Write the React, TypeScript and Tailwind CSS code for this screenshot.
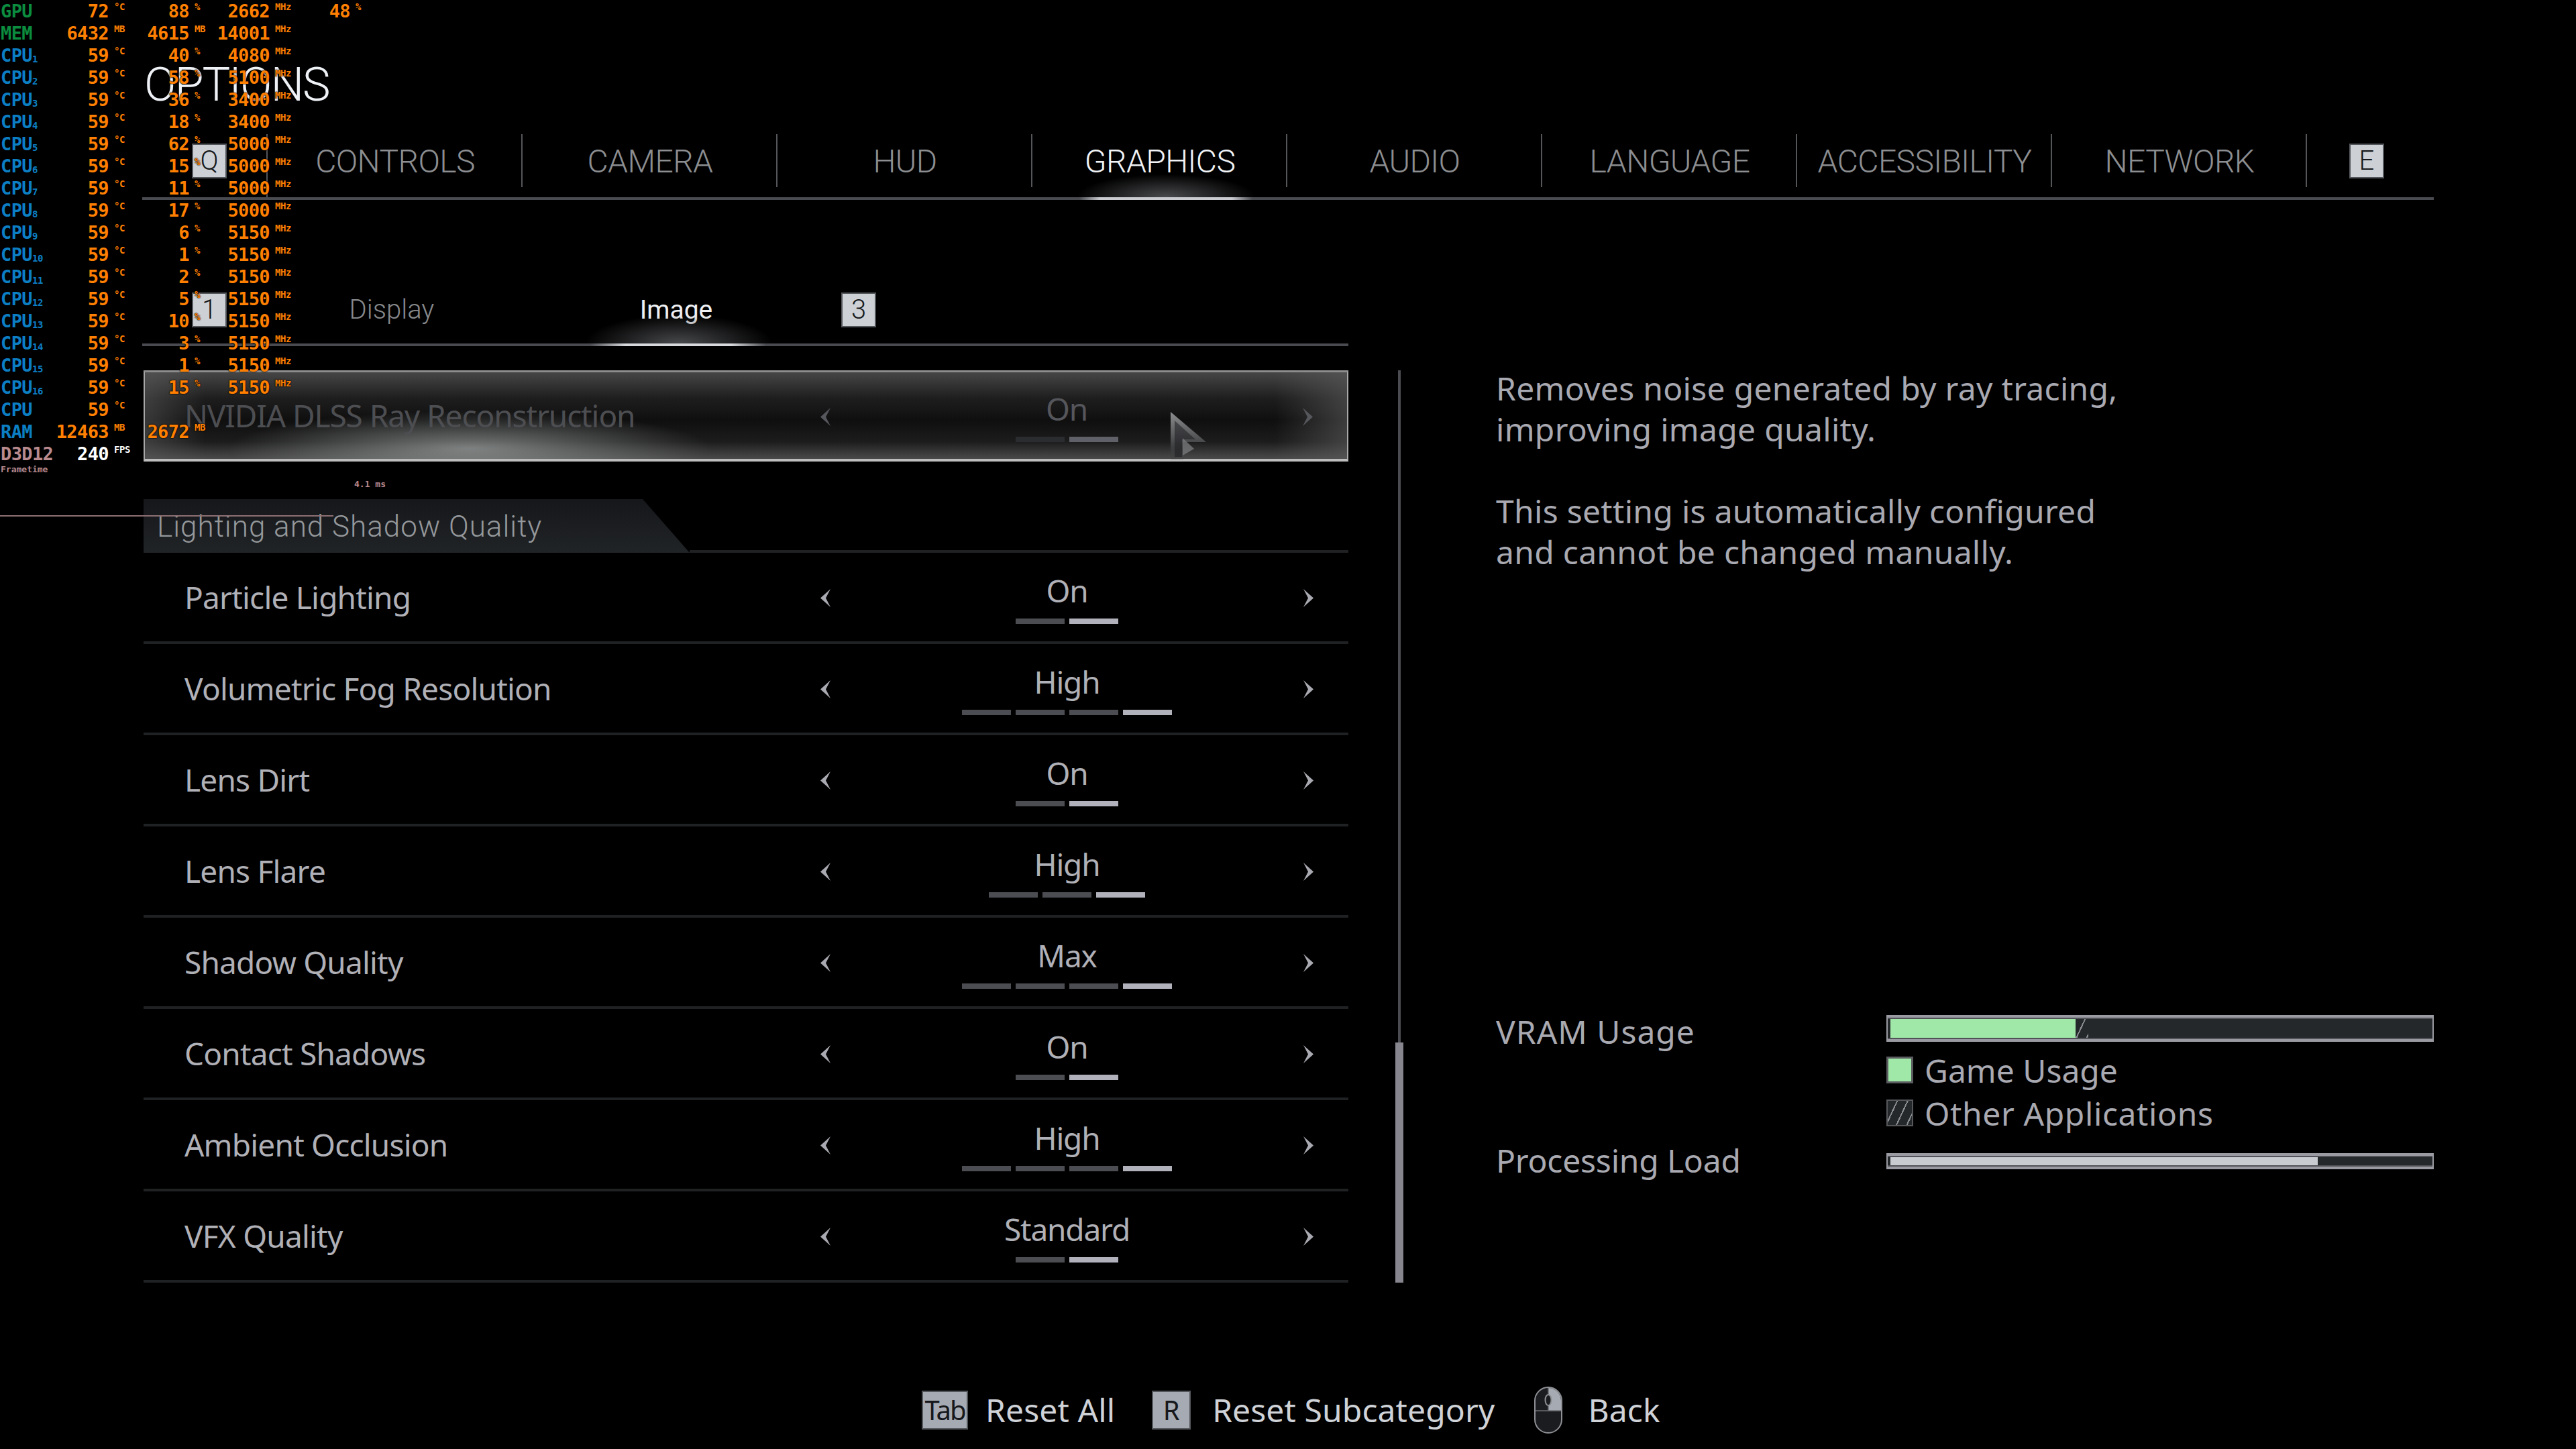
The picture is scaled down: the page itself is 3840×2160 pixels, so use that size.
import React from 'react';

interface OsdRow {
  label: string;
  sub?: string;
  labelColor: string;
  temp?: string;
  tempUnit?: string;
  load?: string;
  loadUnit?: string;
  clock?: string;
  clockUnit?: string;
  extra?: string;
}

const cpuRows: [string, string][] = [
  ['40', '4080'],
  ['58', '5100'],
  ['36', '3400'],
  ['18', '3400'],
  ['62', '5000'],
  ['15', '5000'],
  ['11', '5000'],
  ['17', '5000'],
  ['6', '5150'],
  ['1', '5150'],
  ['2', '5150'],
  ['5', '5150'],
  ['10', '5150'],
  ['3', '5150'],
  ['1', '5150'],
  ['15', '5150'],
];

const osdRows: OsdRow[] = [
  { label: 'GPU', labelColor: 'text-[#0b8c3e]', temp: '72', tempUnit: '°C', load: '88', loadUnit: '%', clock: '2662', clockUnit: 'MHz', extra: '48' },
  { label: 'MEM', labelColor: 'text-[#0b8c3e]', temp: '6432', tempUnit: 'MB', load: '4615', loadUnit: 'MB', clock: '14001', clockUnit: 'MHz' },
  ...cpuRows.map(([load, clock], i) => ({
    label: 'CPU',
    sub: String(i + 1),
    labelColor: 'text-[#0c7fc4]',
    temp: '59',
    tempUnit: '°C',
    load,
    loadUnit: '%',
    clock,
    clockUnit: 'MHz',
  })),
  { label: 'CPU', labelColor: 'text-[#0c7fc4]', temp: '59', tempUnit: '°C' },
  { label: 'RAM', labelColor: 'text-[#0c7fc4]', temp: '12463', tempUnit: 'MB', load: '2672', loadUnit: 'MB' },
];

function OsdCell({ value, unit, width, color = 'text-[#ff8000]' }: { value?: string; unit?: string; width: string; color?: string }) {
  if (!value) return <div className={width} />;
  return (
    <div className={`${width} flex items-start justify-end ${color} [text-shadow:0_0_2px_#000,0_0_2px_#000]`}>
      <span>{value}</span>
      <span className="w-[40px] pl-[8px] pt-[3px] text-[14px] leading-[14px] tracking-[-0.4px]">{unit}</span>
    </div>
  );
}

function Osd() {
  return (
    <div className="absolute left-0 top-0 z-20 font-['DejaVu_Sans_Mono',monospace] text-[27px] font-bold leading-[33px] tracking-[-0.6px]">
      {osdRows.map((row, i) => (
        <div key={i} className="flex h-[33px] items-start">
          <div className={`flex w-[80px] items-end pl-[1px] ${row.labelColor}`}>
            <span>{row.label}</span>
            {row.sub && <span className="mb-[4px] text-[14px] leading-[14px] tracking-[-0.4px]">{row.sub}</span>}
          </div>
          <OsdCell value={row.temp} unit={row.tempUnit} width="w-[122px]" />
          <OsdCell value={row.load} unit={row.loadUnit} width="w-[120px]" />
          <OsdCell value={row.clock} unit={row.clockUnit} width="w-[120px]" />
          <OsdCell value={row.extra} unit="%" width="w-[120px]" />
        </div>
      ))}
      <div className="flex h-[33px] items-start">
        <div className="w-[80px] pl-[1px] text-[#b98a8e]">D3D12</div>
        <OsdCell value="240" unit="FPS" width="w-[122px]" color="text-white" />
      </div>
      <div className="-mt-[1px] pl-[1px] text-[13px] leading-[16px] tracking-normal text-[#b98a8e]">Frametime</div>
      <div className="mt-[6px] pl-[528px] text-[13px] leading-[16px] tracking-normal text-[#b98a8e]">4.1 ms</div>
      <div className="mt-[38px] h-[2px] w-[497px] bg-[#8c6f72]" />
    </div>
  );
}

function KeyCap({ label, className = '' }: { label: string; className?: string }) {
  return (
    <div className={`flex h-[52px] w-[52px] shrink-0 items-center justify-center border-2 border-[#53565a] bg-[#cdd1d6] font-['Roboto',sans-serif] text-[40px] font-light text-[#16181b] ${className}`}>
      {label}
    </div>
  );
}

function Chevron({ flip = false, dim = false }: { flip?: boolean; dim?: boolean }) {
  return (
    <svg viewBox="0 0 15 27" className={`mt-[3px] h-[27px] w-[15px] shrink-0 ${flip ? '-scale-x-100' : ''} ${dim ? 'fill-[#56575c]' : 'fill-[#a9a9b1]'}`}>
      <path d="M0 0 L15 13.5 L0 27 L7 13.5 Z" />
    </svg>
  );
}

function Pips({ count, dim = false }: { count: number; dim?: boolean }) {
  return (
    <div className="mt-[11px] flex gap-[7px]">
      {Array.from({ length: count }).map((_, i) => {
        const active = i === count - 1;
        let color = active ? 'bg-[#b0b1bb]' : 'bg-[#4c4d52]';
        if (dim) color = active ? 'bg-[#5f6068]' : 'bg-[#2b2c30]';
        return <div key={i} className={`h-[8px] w-[73px] ${color}`} />;
      })}
    </div>
  );
}

interface SettingProps {
  label: string;
  value: string;
  pips: number;
  dim?: boolean;
}

function SettingRow({ label, value, pips, dim = false }: SettingProps) {
  return (
    <div className={`flex h-full flex-1 items-center ${dim ? 'pl-[59px] pr-[51px]' : 'pl-[61px] pr-[52px]'}`}>
      <div className={`w-[948px] text-[46px] ${dim ? 'tracking-[-1.1px] text-[#4d4e52]' : 'tracking-[-0.8px] text-[#b0b0b7]'}`}>{label}</div>
      <Chevron flip dim={dim} />
      <div className={`flex flex-1 flex-col items-center ${dim ? '-mt-[3px]' : '-mt-[1px]'}`}>
        <div className={`h-[62px] text-[46px] leading-[62px] tracking-[-1.2px] ${dim ? 'text-[#55565b]' : 'text-[#b0b0b7]'}`}>{value}</div>
        <Pips count={pips} dim={dim} />
      </div>
      <Chevron dim={dim} />
    </div>
  );
}

const settings: SettingProps[] = [
  { label: 'Particle Lighting', value: 'On', pips: 2 },
  { label: 'Volumetric Fog Resolution', value: 'High', pips: 4 },
  { label: 'Lens Dirt', value: 'On', pips: 2 },
  { label: 'Lens Flare', value: 'High', pips: 3 },
  { label: 'Shadow Quality', value: 'Max', pips: 4 },
  { label: 'Contact Shadows', value: 'On', pips: 2 },
  { label: 'Ambient Occlusion', value: 'High', pips: 4 },
  { label: 'VFX Quality', value: 'Standard', pips: 2 },
];

const topTabs = ['CONTROLS', 'CAMERA', 'HUD', 'GRAPHICS', 'AUDIO', 'LANGUAGE', 'ACCESSIBILITY', 'NETWORK'];

function Cursor() {
  return (
    <svg viewBox="0 0 56 72" className="absolute left-[1528px] top-[58px] h-[72px] w-[56px]">
      <defs>
        <linearGradient id="cursorFade" x1="0" y1="0" x2="0" y2="1">
          <stop offset="0" stopColor="#8d8e90" />
          <stop offset="0.6" stopColor="#4c4d4f" />
          <stop offset="1" stopColor="#3a3b3d" stopOpacity="0.2" />
        </linearGradient>
      </defs>
      <path d="M1 1 L54 46 L20 46 L20 72 L1 72 Z" fill="url(#cursorFade)" />
      <path d="M7 14 L38 42 L18 42 L18 68 L7 68 Z" fill="#1d1e20" fillOpacity="0.55" />
      <path d="M19 40 L36 56 L19 66 Z" fill="#77787b" fillOpacity="0.8" />
    </svg>
  );
}

function Mouse() {
  return (
    <svg viewBox="0 0 42 70" className="h-[70px] w-[42px] shrink-0">
      <rect x="1" y="1" width="40" height="68" rx="20" fill="#1b1c1f" stroke="#8e9095" strokeWidth="2" />
      <path d="M21 2 A19 19 0 0 1 40 21 V36 H21 Z" fill="#a6abb3" />
      <path d="M2 36 H40 M21 2 V36" stroke="#6c6e73" strokeWidth="1.5" />
      <ellipse cx="21" cy="20" rx="4.5" ry="8" fill="#1b1c1f" stroke="#8e9095" strokeWidth="2" />
    </svg>
  );
}

function Hatch({ className = '' }: { className?: string }) {
  return <div className={`bg-[repeating-linear-gradient(115deg,#25282a_0_12px,#8a8c91_12px_14px)] ${className}`} />;
}

export default function App() {
  return (
    <div className="relative h-[2160px] w-[3840px] overflow-hidden bg-black font-['Noto_Sans',sans-serif]">
      <Osd />

      <h1 className="pl-[215px] pt-[85px] font-['Roboto',sans-serif] text-[70px] font-light leading-[82px] tracking-[-2px] text-[#eef1f6]">OPTIONS</h1>

      {/* top category tabs */}
      <div className="ml-[212px] mt-[33px] flex h-[98px] w-[3416px] items-start border-b-4 border-[#4a4b50] pl-[74px]">
        <KeyCap label="Q" className="mt-[14px]" />
        <div className="ml-[59px] flex border-l-2 border-[#55565a]">
          {topTabs.map((tab) => (
            <div key={tab} className="relative flex h-[94px] w-[380px] justify-center">
              <div className="absolute right-0 top-0 h-[79px] w-[2px] bg-[#55565a]" />
              <span className={`pt-[12px] font-['Roboto',sans-serif] text-[48px] font-light leading-[58px] tracking-[-0.6px] ${tab === 'GRAPHICS' ? 'text-[#f1f3f6]' : 'text-[#8c8e91]'}`}>{tab}</span>
              {tab === 'GRAPHICS' && (
                <div className="absolute bottom-0 left-[68px] h-[34px] w-[262px] bg-[radial-gradient(ellipse_at_bottom,#4a4b4e,transparent_72%)]" />
              )}
              {tab === 'GRAPHICS' && (
                <div className="absolute -bottom-[4px] left-[70px] h-[4px] w-[258px] bg-[linear-gradient(90deg,#4a4b50,#c9cbd0_12%,#c9cbd0_88%,#4a4b50)]" />
              )}
            </div>
          ))}
        </div>
        <KeyCap label="E" className="ml-[63px] mt-[14px]" />
      </div>

      {/* sub tabs */}
      <div className="ml-[212px] mt-[138px] flex h-[80px] w-[1798px] items-start border-b-4 border-[#4a4b50] pl-[74px]">
        <KeyCap label="1" />
        <div className="ml-[34px] flex h-[76px] w-[424px] justify-center pt-[4px] font-['Roboto',sans-serif] text-[40px] font-light leading-[44px] text-[#87898c]">Display</div>
        <div className="relative flex h-[76px] w-[424px] justify-center pt-[4px] font-['Roboto',sans-serif] text-[39px] leading-[44px] text-[#eef0f3]">
          Image
          <div className="absolute bottom-0 left-[79px] h-[42px] w-[274px] bg-[radial-gradient(ellipse_at_bottom,#48494c,transparent_72%)]" />
          <div className="absolute -bottom-[4px] left-[84px] h-[4px] w-[262px] bg-[linear-gradient(90deg,#4a4b50,#d6d8dc_20%,#d6d8dc_80%,#4a4b50)]" />
        </div>
        <KeyCap label="3" className="ml-[34px]" />
      </div>

      {/* body */}
      <div className="ml-[214px] mt-[36px] flex">
        <div className="w-[1796px]">
          <div className="relative flex h-[136px] border-x-2 border-b-4 border-t-[3px] border-x-[#a8a8a8] border-b-[#bdbdbd] border-t-[#8d8d8d] bg-[radial-gradient(ellipse_360px_56px_at_27%_88%,rgba(176,180,180,0.62),transparent),linear-gradient(90deg,rgba(90,90,90,0.55),transparent_5%,transparent_94%,rgba(90,90,90,0.6)),linear-gradient(180deg,#464646,#1e1e1e_30%,#0f0f0f_55%,#1c1c1c_80%,#4a4a4a)]">
            <SettingRow label="NVIDIA DLSS Ray Reconstruction" value="On" pips={2} dim />
            <Cursor />
          </div>

          <div className="mt-[56px] flex h-[80px] items-end">
            <div className="h-[80px] w-[814px] bg-[linear-gradient(180deg,#15171a,#212427)] pl-[20px] pt-[15px] font-['Roboto',sans-serif] text-[44px] font-light leading-[52px] tracking-[1px] text-[#95989b] [clip-path:polygon(0_0,744px_0,814px_100%,0_100%)]">
              Lighting and Shadow Quality
            </div>
            <div className="h-[4px] flex-1 bg-[#1f2123]" />
          </div>

          {settings.map((s) => (
            <div key={s.label} className="flex h-[136px] border-b-4 border-[#1f2123]">
              <SettingRow {...s} />
            </div>
          ))}
        </div>

        {/* scrollbar */}
        <div className="ml-[70px] flex w-[12px] flex-col items-center">
          <div className="h-[1002px] w-[4px] bg-[#4b4b52]" />
          <div className="h-[358px] w-[12px] bg-[#87868f]" />
        </div>

        {/* description and meters */}
        <div className="ml-[138px] w-[1398px] text-[48px] leading-[61px] text-[#a9a9b1]">
          <div className="-mt-[4px] tracking-[0.3px]">
            <p>Removes noise generated by ray tracing,<br />improving image quality.</p>
            <p className="mt-[61px]">This setting is automatically configured<br />and cannot be changed manually.</p>
          </div>

          <div className="mt-[660px] flex">
            <div className="-mt-[6px] w-[582px] tracking-[1px]">VRAM Usage</div>
            <div className="flex-1">
              <div className="h-[40px] border-x-2 border-y-4 border-[#9a9aa2] bg-[#25282a]">
                <div className="flex h-full border-y-2 border-[#505257] pl-[4px]">
                  <div className="h-full w-[276px] bg-[#a0e8a8]" />
                  <Hatch className="h-full w-[19px]" />
                </div>
              </div>
              <div className="mt-[22px] flex h-[40px] items-center gap-[17px]">
                <div className="h-[40px] w-[40px] border-[3px] border-[#5a5c5f] bg-[#a0e8a8]" />
                <span>Game Usage</span>
              </div>
              <div className="mt-[24px] flex h-[40px] items-center gap-[17px] tracking-[0.6px]">
                <Hatch className="h-[40px] w-[40px] border-2 border-[#55575a]" />
                <span>Other Applications</span>
              </div>
            </div>
          </div>

          <div className="mt-[23px] flex items-center">
            <div className="-mt-[3px] w-[582px] tracking-[-0.2px]">Processing Load</div>
            <div className="h-[24px] flex-1 border-x-2 border-y-4 border-[#9a9aa2] bg-[#25282a]">
              <div className="h-full border-y-2 border-[#505257] pl-[4px]">
                <div className="h-full w-[637px] bg-[#c8ccd0]" />
              </div>
            </div>
          </div>
        </div>
      </div>

      {/* footer hints */}
      <div className="absolute left-[1374px] top-[2067px] flex h-[70px] items-center text-[48px] tracking-[0.1px] text-[#cfd2d7]">
        <div className="flex h-[58px] w-[69px] items-center justify-center border-2 border-[#53565a] bg-[#a6abb3] text-[40px] tracking-[-2px] text-[#16181b]">Tab</div>
        <span className="ml-[26px]">Reset All</span>
        <div className="ml-[55px] flex h-[58px] w-[58px] items-center justify-center border-2 border-[#53565a] bg-[#a6abb3] text-[40px] text-[#16181b]">R</div>
        <span className="ml-[32px]">Reset Subcategory</span>
        <div className="ml-[59px]"><Mouse /></div>
        <span className="ml-[38px]">Back</span>
      </div>
    </div>
  );
}
